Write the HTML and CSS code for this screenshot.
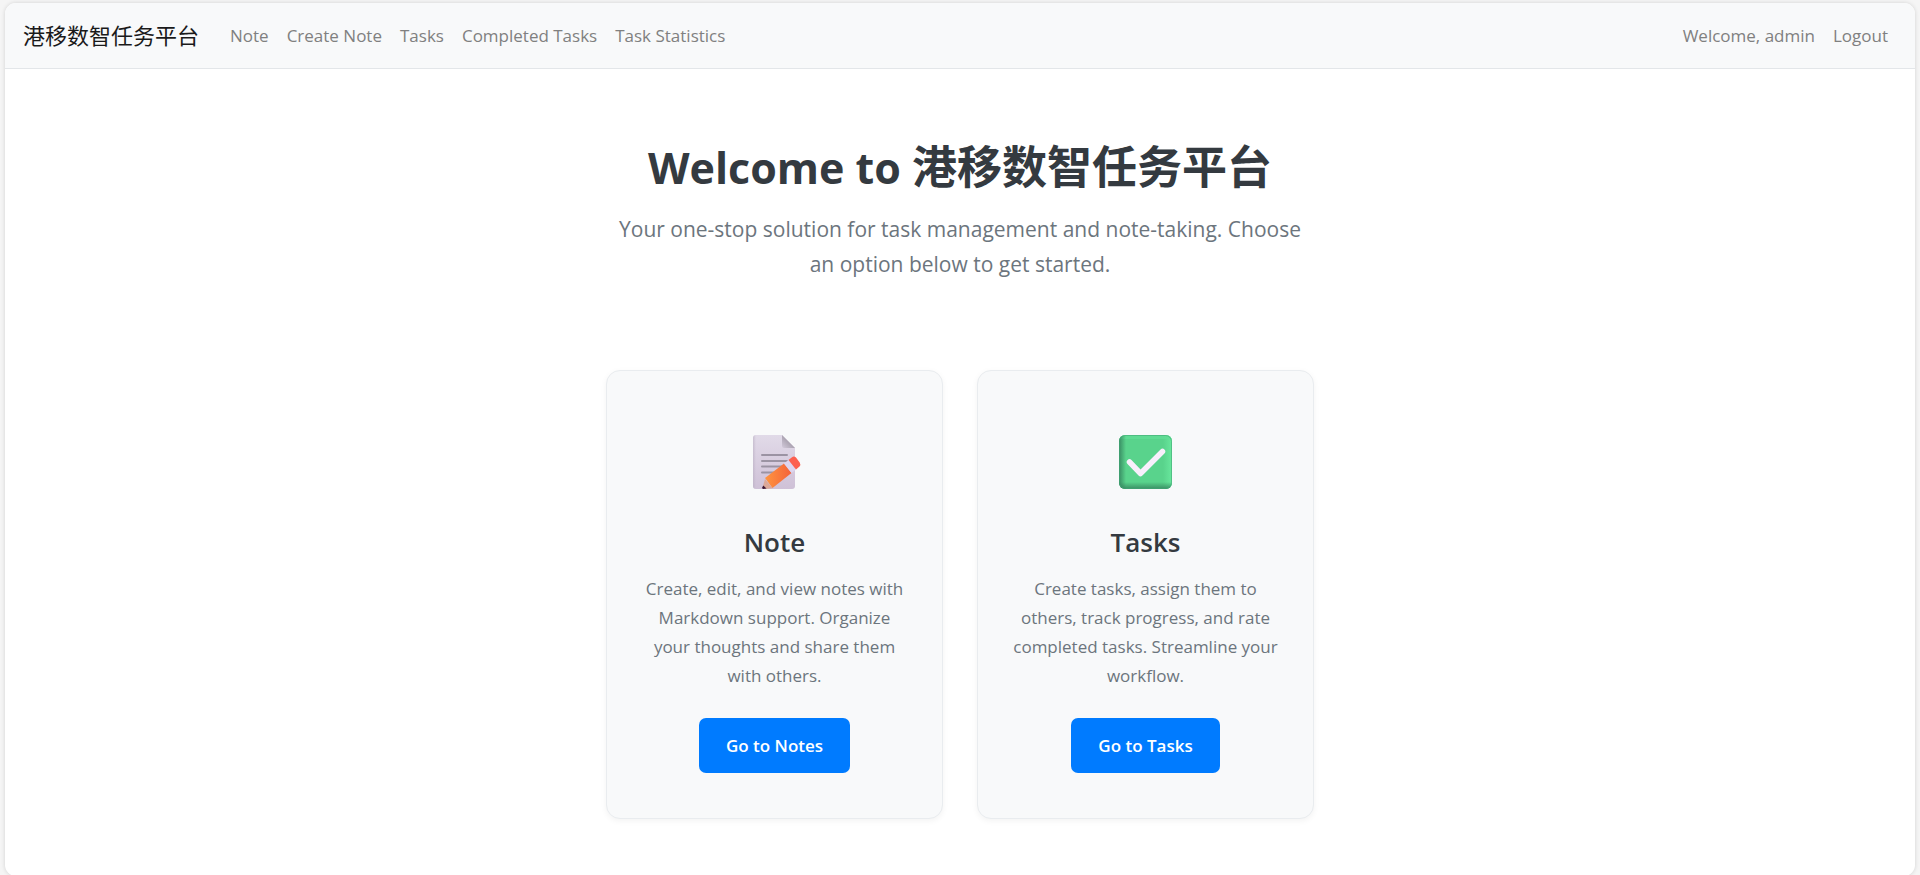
FILE: index.html
```html
<!DOCTYPE html>
<html lang="en">
<head>
  <meta charset="UTF-8">
  <meta name="viewport" content="width=device-width, initial-scale=1.0">
  <title>港移数智任务平台</title>
  <link rel="stylesheet" href="styles.css">
</head>
<body>
  <div class="page">
    <nav class="navbar">
      <a class="navbar-brand" href="/">港移数智任务平台</a>
      <ul class="navbar-nav">
        <li><a href="/notes">Note</a></li>
        <li><a href="/notes/create">Create Note</a></li>
        <li><a href="/tasks">Tasks</a></li>
        <li><a href="/tasks/completed">Completed Tasks</a></li>
        <li><a href="/tasks/statistics">Task Statistics</a></li>
      </ul>
      <ul class="navbar-nav navbar-right">
        <li><span>Welcome, admin</span></li>
        <li><a href="/logout">Logout</a></li>
      </ul>
    </nav>

    <main class="container">
      <div class="hero">
        <h1>Welcome to <span class="site-name">港移数智任务平台</span></h1>
        <p>Your one-stop solution for task management and note-taking. Choose an option below to get started.</p>
      </div>

      <div class="options">
        <div class="card">
          <svg class="card-icon" viewBox="0 0 54 54" aria-hidden="true">
            <defs>
              <linearGradient id="paper" x1="0" y1="0" x2="0" y2="1">
                <stop offset="0" stop-color="#e1dae8"/>
                <stop offset="1" stop-color="#cfc1d7"/>
              </linearGradient>
              <linearGradient id="edge" x1="0" y1="0" x2="1" y2="0">
                <stop offset="0" stop-color="#b9afc2" stop-opacity="0.6"/>
                <stop offset="1" stop-color="#b9afc2" stop-opacity="0"/>
              </linearGradient>
              <linearGradient id="fold" x1="0" y1="1" x2="1" y2="0">
                <stop offset="0" stop-color="#d3cadb"/>
                <stop offset="0.5" stop-color="#aba3b1"/>
              </linearGradient>
              <linearGradient id="pencil" x1="0" y1="0" x2="1" y2="0">
                <stop offset="0" stop-color="#ff9540"/>
                <stop offset="1" stop-color="#f4623a"/>
              </linearGradient>
            </defs>
            <path d="M8 0H34L47 13V51a3 3 0 0 1-3 3H8a3 3 0 0 1-3-3V3a3 3 0 0 1 3-3z" fill="url(#paper)"/>
            <path d="M8 0V54a3 3 0 0 1-3-3V3a3 3 0 0 1 3-3z" fill="url(#edge)"/>
            <path d="M34 0L47 13H36a2 2 0 0 1-2-2z" fill="url(#fold)"/>
            <path d="M14 20H39M14 26H39M14 31.500H34M14 37.500H26" stroke="#9b93a3" stroke-width="2" stroke-linecap="round"/>
            <path d="M17 44L24.500 53.300 17 54 14.500 53z" fill="#dca898"/>
            <path d="M15.300 50.500L18.500 53.500 15 54 14 53z" fill="#3a1734"/>
            <path d="M17 43L36 28.500 43.500 38 24.500 53z" fill="url(#pencil)"/>
            <path d="M36 28.500L40.500 25 48 34.500 43.500 38z" fill="#ddd5ef"/>
            <path d="M40.500 25L44 22.200Q46 20.500 48 22.500L51.700 27.500Q53 29.500 51.500 31.500L48 34.500z" fill="#fc6050"/>
          </svg>
          <h2>Note</h2>
          <p>Create, edit, and view notes with Markdown support. Organize your thoughts and share them with others.</p>
          <a class="btn" href="/notes">Go to Notes</a>
        </div>

        <div class="card">
          <svg class="card-icon" viewBox="0 0 54 54" aria-hidden="true">
            <defs>
              <linearGradient id="left" x1="0" y1="0" x2="1" y2="0">
                <stop offset="0" stop-color="#33815c" stop-opacity="0.85"/>
                <stop offset="1" stop-color="#33815c" stop-opacity="0"/>
              </linearGradient>
              <linearGradient id="bottom" x1="0" y1="1" x2="0" y2="0">
                <stop offset="0" stop-color="#33815c" stop-opacity="0.85"/>
                <stop offset="1" stop-color="#33815c" stop-opacity="0"/>
              </linearGradient>
              <linearGradient id="light" x1="1" y1="0" x2="0" y2="0">
                <stop offset="0" stop-color="#69e79d"/>
                <stop offset="1" stop-color="#69e79d" stop-opacity="0"/>
              </linearGradient>
              <clipPath id="box"><rect width="53" height="54" rx="6"/></clipPath>
            </defs>
            <g clip-path="url(#box)">
              <rect width="53" height="54" fill="#59d38c"/>
              <rect x="44" width="9" height="54" fill="url(#light)"/>
              <rect width="53" height="4" fill="#62de95" opacity="0.7"/>
              <rect width="7" height="54" fill="url(#left)"/>
              <rect y="47" width="53" height="7" fill="url(#bottom)"/>
              <rect x="0.500" y="0.500" width="52" height="53" rx="6" fill="none" stroke="#43a876" opacity="0.6"/>
            </g>
            <path d="M10.500 27L21.500 38.500 43.500 16.500" fill="none" stroke="#f8effc" stroke-width="5.500" stroke-linecap="round" stroke-linejoin="round"/>
          </svg>
          <h2>Tasks</h2>
          <p>Create tasks, assign them to others, track progress, and rate completed tasks. Streamline your workflow.</p>
          <a class="btn" href="/tasks">Go to Tasks</a>
        </div>
      </div>
    </main>
  </div>
</body>
</html>
```
FILE: styles.css
```css
* {
  box-sizing: border-box;
}

body {
  margin: 0;
  padding: 3px 5px 0;
  background: #f5f5f5;
  color: #343a40;
  font-family: "Open Sans", "Noto Sans CJK SC", sans-serif;
  font-size: 17px;
  line-height: 29px;
}

a {
  text-decoration: none;
}

.page {
  background: white;
  border-radius: 11px;
  box-shadow: 0 0 4px rgba(0, 0, 0, 0.15);
  overflow: hidden;
}

.navbar {
  display: flex;
  align-items: center;
  height: 66px;
  padding: 0 27px 0 18px;
  background: #f8f9fa;
  border-bottom: 1px solid #e3e6e9;
}

.navbar-brand {
  margin-right: 31px;
  color: #1a1a1a;
  font-size: 22px;
}

.navbar-nav {
  display: flex;
  gap: 18px;
  margin: 0;
  padding: 0;
  list-style: none;
  color: #808080;
}

.navbar-nav a {
  color: #808080;
}

.navbar-right {
  margin-left: auto;
}

.container {
  max-width: 708px;
  margin: 0 auto;
  padding: 68px 0 57px;
  text-align: center;
}

.hero {
  max-width: 700px;
  margin: 0 auto 88px;
}

h1 {
  margin: 0 0 14px;
  font-size: 43px;
  font-weight: 700;
  line-height: 60px;
}

.site-name {
  font-size: 45px;
}

.hero p {
  margin: 0;
  color: #6c757d;
  font-size: 21px;
  line-height: 35px;
}

.options {
  display: grid;
  grid-template-columns: repeat(auto-fit, minmax(300px, 1fr));
  gap: 34px;
}

.card {
  padding: 64px 34px 45px;
  background: #f8f9fa;
  border: 1px solid #e9ecef;
  border-radius: 14px;
  box-shadow: 0 2px 6px rgba(0, 0, 0, 0.05);
}

.card-icon {
  display: block;
  width: 54px;
  height: 54px;
  margin: 0 auto 35px;
}

h2 {
  margin: 0 0 14px;
  font-size: 26px;
  font-weight: 600;
  line-height: 36px;
}

.card p {
  margin: 0 0 28px;
  color: #6c757d;
}

.btn {
  display: inline-block;
  padding: 13px 27px;
  background: #007bff;
  border-radius: 7px;
  color: white;
  font-weight: 600;
}

.btn:hover {
  background: #0056b3;
}
```
